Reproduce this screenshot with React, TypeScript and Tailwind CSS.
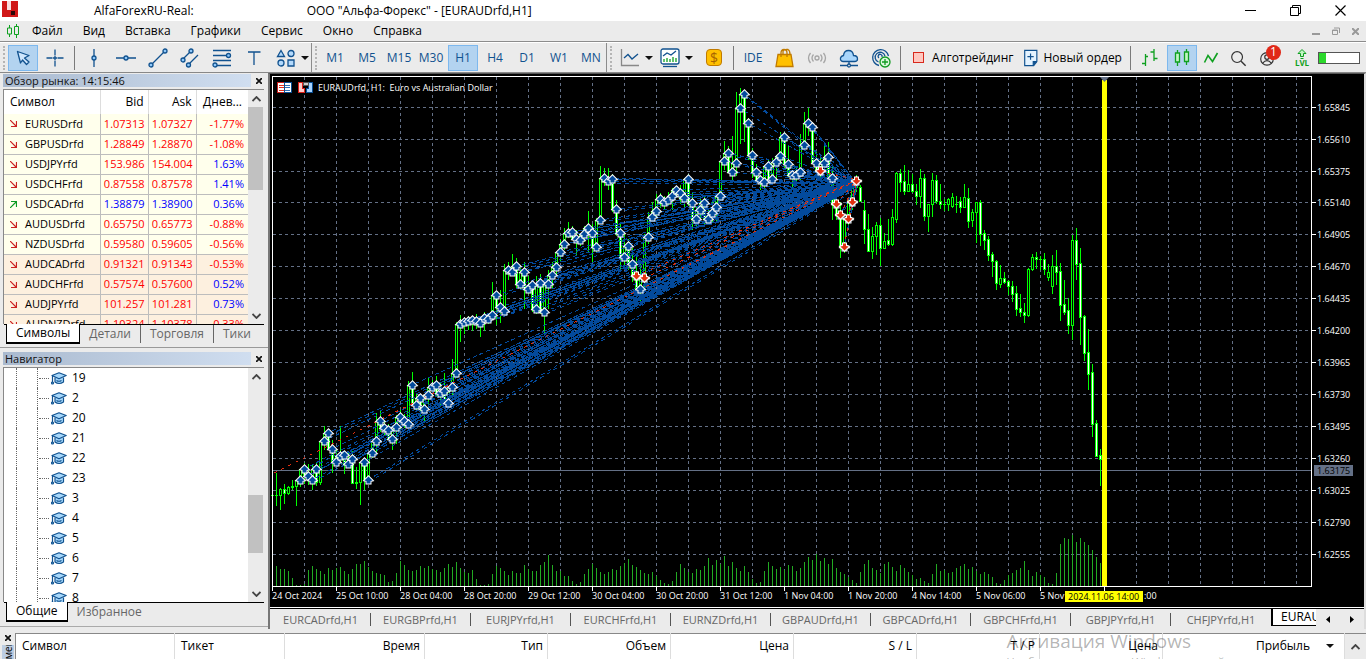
import type { ReactNode } from "react";
import clsx from "clsx";

interface Quote {
  symbol: string;
  bid: string;
  ask: string;
  daily: string;
  up?: boolean;
}

const quotes: Quote[] = [
  { symbol: "EURUSDrfd", bid: "1.07313", ask: "1.07327", daily: "-1.77%" },
  { symbol: "GBPUSDrfd", bid: "1.28849", ask: "1.28870", daily: "-1.08%" },
  { symbol: "USDJPYrfd", bid: "153.986", ask: "154.004", daily: "1.63%" },
  { symbol: "USDCHFrfd", bid: "0.87558", ask: "0.87578", daily: "1.41%" },
  { symbol: "USDCADrfd", bid: "1.38879", ask: "1.38900", daily: "0.36%", up: true },
  { symbol: "AUDUSDrfd", bid: "0.65750", ask: "0.65773", daily: "-0.88%" },
  { symbol: "NZDUSDrfd", bid: "0.59580", ask: "0.59605", daily: "-0.56%" },
  { symbol: "AUDCADrfd", bid: "0.91321", ask: "0.91343", daily: "-0.53%" },
  { symbol: "AUDCHFrfd", bid: "0.57574", ask: "0.57600", daily: "0.52%" },
  { symbol: "AUDJPYrfd", bid: "101.257", ask: "101.281", daily: "0.73%" },
  { symbol: "AUDNZDrfd", bid: "1.10324", ask: "1.10378", daily: "0.33%" },
];

const menuItems = ["Файл", "Вид", "Вставка", "Графики", "Сервис", "Окно", "Справка"];
const timeframes = ["M1", "M5", "M15", "M30", "H1", "H4", "D1", "W1", "MN"];
const treeItems = ["19", "2", "20", "21", "22", "23", "3", "4", "5", "6", "7", "8"];
const chartTabs = [
  "EURCADrfd,H1",
  "EURGBPrfd,H1",
  "EURJPYrfd,H1",
  "EURCHFrfd,H1",
  "EURNZDrfd,H1",
  "GBPAUDrfd,H1",
  "GBPCADrfd,H1",
  "GBPCHFrfd,H1",
  "GBPJPYrfd,H1",
  "CHFJPYrfd,H1",
];

// Bars with entries: [open, high, low] in chart units, close is the next open
const entryBars: number[][] = [
  [495, 495, 526], [495, 473, 506], [495, 488, 510], [489, 484, 504], [493, 486, 495],
  [487, 480, 490], [486, 484, 506], [480, 470, 487], [469, 463, 484], [476, 464, 485],
  [480, 465, 490], [469, 463, 486], [482, 440, 485], [441, 426, 450], [433, 430, 450],
  [449, 440, 473], [462, 450, 465], [456, 426, 463], [455, 453, 474], [464, 452, 466],
  [459, 451, 483], [483, 467, 489], [482, 462, 505], [462, 458, 490], [480, 464, 484],
  [453, 446, 458], [441, 413, 452], [421, 411, 432], [428, 420, 436], [430, 424, 436],
  [439, 426, 450], [427, 415, 444], [417, 410, 430], [421, 414, 428], [424, 381, 430],
  [385, 372, 403], [405, 394, 412], [398, 394, 416], [409, 396, 423], [395, 378, 404],
  [387, 380, 396], [385, 376, 396], [393, 382, 406], [391, 373, 404], [403, 386, 408],
  [387, 359, 395], [373, 322, 376], [324, 315, 342], [322, 318, 334], [321, 316, 330],
  [320, 316, 331], [321, 314, 329], [323, 318, 337], [318, 312, 331], [319, 313, 324],
  [315, 282, 320], [295, 292, 325], [307, 290, 323], [311, 264, 314], [270, 262, 280],
  [272, 254, 276], [266, 258, 288], [284, 268, 290], [272, 262, 309], [289, 276, 294],
  [285, 280, 312], [309, 276, 314], [283, 274, 314], [312, 280, 335], [284, 270, 309],
  [275, 262, 289], [267, 258, 276], [252, 240, 262], [244, 228, 250], [233, 222, 238],
  [232, 226, 240], [239, 230, 256], [240, 233, 246], [234, 226, 242], [228, 211, 253],
  [233, 224, 262], [247, 218, 252], [220, 166, 222], [178, 168, 186], [181, 168, 190],
  [179, 174, 212], [209, 200, 236], [233, 222, 271], [257, 233, 270], [246, 239, 270],
  [264, 248, 282], [276, 254, 284], [289, 262, 306], [278, 234, 290], [237, 212, 244],
  [217, 202, 222], [211, 194, 218], [199, 193, 208], [202, 196, 210], [200, 192, 206],
  [196, 188, 210], [190, 186, 198], [193, 185, 204], [198, 178, 207], [179, 174, 206],
  [203, 193, 230], [219, 206, 226], [210, 196, 218], [203, 196, 224], [219, 208, 225],
  [213, 200, 222], [207, 194, 222], [196, 165, 199], [161, 141, 170], [153, 146, 170],
  [172, 136, 182], [163, 92, 176], [108, 88, 144], [94, 90, 142], [123, 118, 160],
  [155, 148, 178], [172, 164, 184], [180, 172, 190], [182, 174, 188], [166, 160, 178],
  [179, 158, 183], [162, 155, 180], [156, 132, 164], [137, 132, 168], [164, 145, 178],
  [175, 170, 190], [175, 168, 181], [172, 134, 184], [145, 112, 148], [123, 108, 136],
  [127, 122, 164], [163, 152, 174], [171, 156, 180], [163, 144, 172], [157, 142, 182],
  [178, 166, 220], [204, 192, 220], [215, 202, 258], [247, 218, 253], [219, 200, 228],
  [202, 188, 210], [181, 175, 192],
];

// Later bars: [open, high, low, close]
const laterBars: number[][] = [
  [187, 185, 201, 201], [210, 200, 244, 229], [229, 214, 251, 251], [251, 227, 259, 236],
  [236, 222, 255, 225], [225, 218, 266, 248], [248, 233, 249, 241], [240, 219, 246, 244],
  [244, 209, 246, 217], [219, 172, 223, 173], [173, 169, 192, 182], [181, 165, 195, 191],
  [191, 170, 192, 184], [184, 174, 193, 191], [191, 184, 205, 196], [196, 169, 208, 178],
  [178, 174, 221, 216], [216, 204, 232, 204], [204, 173, 217, 180], [180, 175, 204, 201],
  [201, 184, 209, 204], [204, 199, 211, 204], [204, 198, 211, 199], [206, 193, 208, 197],
  [204, 196, 213, 204], [201, 197, 213, 207], [207, 184, 207, 197], [198, 188, 228, 221],
  [220, 209, 227, 212], [212, 202, 243, 202], [202, 200, 246, 234], [233, 230, 250, 240],
  [239, 236, 261, 255], [254, 252, 277, 261], [261, 260, 290, 283], [284, 265, 288, 278],
  [278, 272, 284, 282], [281, 280, 295, 286], [286, 281, 302, 294], [293, 286, 316, 309],
  [308, 294, 317, 312], [312, 303, 323, 315], [315, 268, 317, 269], [269, 254, 271, 257],
  [257, 252, 269, 259], [259, 256, 270, 259], [259, 253, 275, 269], [277, 264, 281, 272],
  [286, 255, 294, 266], [266, 250, 285, 272], [271, 263, 321, 305], [304, 280, 315, 312],
  [310, 298, 334, 325], [325, 235, 340, 240], [240, 228, 280, 264], [263, 248, 345, 317],
  [316, 315, 361, 353], [352, 329, 390, 374], [372, 364, 437, 424], [423, 420, 456, 456],
  [455, 449, 486, 459],
];

const volumes: number[] = [
  30, 20, 17, 17, 15, 8, 1, 1, 2, 16, 20, 17, 15, 12, 18, 16, 18, 19, 15, 12, 17, 22, 22, 25, 19,
  15, 13, 12, 11, 4, 5, 13, 25, 21, 16, 15, 16, 20, 18, 20, 17, 16, 14, 18, 22, 19, 24, 18, 14, 13,
  16, 7, 1, 1, 2, 12, 20, 18, 15, 11, 15, 13, 13, 21, 17, 15, 15, 21, 24, 31, 21, 15, 15, 10, 10,
  5, 2, 4, 12, 17, 22, 18, 14, 12, 14, 17, 16, 20, 23, 27, 21, 19, 16, 13, 12, 14, 10, 6, 3, 2,
  5, 14, 22, 18, 14, 13, 17, 16, 20, 28, 21, 26, 22, 30, 20, 24, 18, 15, 20, 14, 7, 3, 4, 15, 24,
  20, 17, 19, 16, 21, 20, 15, 18, 24, 29, 26, 32, 25, 28, 22, 27, 18, 14, 12, 9, 6, 3, 14, 22, 26,
  18, 16, 13, 22, 24, 19, 15, 21, 18, 14, 11, 7, 8, 5, 3, 12, 22, 15, 16, 13, 14, 18, 20, 22, 17,
  19, 15, 12, 14, 12, 9, 3, 2, 6, 11, 13, 16, 18, 25, 16, 10, 14, 11, 9, 3, 2, 13, 42, 48, 47, 51,
  44, 48, 44, 41, 36, 29, 23,
];

const priceLabels = [
  { y: 107, text: "1.65845" }, { y: 139, text: "1.65610" }, { y: 171, text: "1.65375" },
  { y: 202, text: "1.65140" }, { y: 234, text: "1.64905" }, { y: 266, text: "1.64670" },
  { y: 298, text: "1.64435" }, { y: 330, text: "1.64200" }, { y: 362, text: "1.63965" },
  { y: 394, text: "1.63730" }, { y: 426, text: "1.63495" }, { y: 458, text: "1.63260" },
  { y: 490, text: "1.63025" }, { y: 522, text: "1.62790" }, { y: 554, text: "1.62555" },
];

const timeLabels = [
  "24 Oct 2024", "25 Oct 10:00", "28 Oct 04:00", "28 Oct 20:00", "29 Oct 12:00", "30 Oct 04:00",
  "30 Oct 20:00", "31 Oct 12:00", "1 Nov 04:00", "1 Nov 20:00", "4 Nov 14:00", "5 Nov 06:00",
  "5 Nov",
];

const CHART_LEFT = 272;
const STEP = 4;
const noEntry = [12, 21, 22];
const sellEntries = [91, 93, 137, 141, 142, 143, 144, 145, 146];

const bars = [
  ...entryBars.map(([open, high, low], i) => ({
    open,
    high,
    low,
    close: i + 1 < entryBars.length ? entryBars[i + 1][0] : 187,
  })),
  ...laterBars.map(([open, high, low, close]) => ({ open, high, low, close })),
];

const entries = entryBars
  .map(([y], i) => ({ x: CHART_LEFT + i * STEP, y, i, sell: sellEntries.includes(i) }))
  .filter(({ i }) => i >= 7 && !noEntry.includes(i));

const gridColumns = Array.from({ length: 32 }, (_, i) => 304 + i * 32);

function Candles() {
  return (
    <g shapeRendering="crispEdges">
      {bars.map((bar, i) => {
        const x = CHART_LEFT + i * STEP;
        const top = Math.min(bar.open, bar.close);
        const height = Math.abs(bar.open - bar.close);
        const high = Math.min(bar.high, top);
        const low = Math.max(bar.low, top + height);
        return (
          <g key={i}>
            <rect x={x} y={high} width={1} height={low - high} fill="#00ff00" />
            <rect x={x - 1} y={top} width={3} height={height + 1} fill="#00ff00" />
            {height > 1 && (
              <rect x={x} y={top + 1} width={1} height={height - 1} fill={bar.close > bar.open ? "#ffffff" : "#000000"} />
            )}
          </g>
        );
      })}
    </g>
  );
}

function Chart() {
  return (
    <svg
      viewBox="270 74 1094 533"
      preserveAspectRatio="xMinYMin slice"
      className="block h-full w-full font-['Open_Sans',sans-serif] text-[9px]"
      role="img"
      aria-label="EURAUDrfd, H1"
    >
      <rect x={270} y={74} width={1094} height={533} fill="#000" />
      <g stroke="#647086" strokeDasharray="3 3" shapeRendering="crispEdges">
        {gridColumns.map((x) => (
          <line key={x} x1={x + 0.5} x2={x + 0.5} y1={77} y2={586} />
        ))}
        {priceLabels.map(({ y }) => (
          <line key={y} x1={273} x2={1311} y1={y + 0.5} y2={y + 0.5} />
        ))}
      </g>
      <line x1={273} x2={1311} y1={470.5} y2={470.5} stroke="#647086" />

      <g fill="#22aa22" shapeRendering="crispEdges">
        {volumes.map((v, i) => (
          <rect key={i} x={CHART_LEFT + i * STEP} y={586 - v} width={1} height={v} />
        ))}
      </g>
      <Candles />

      {/* links from entries to the common exit */}
      <g stroke="#034a9c" shapeRendering="crispEdges">
        {entries.map(({ x, y, i }) => (
          <g key={i}>
            <line x1={x} y1={y} x2={857} y2={184} strokeDasharray="4 3" strokeDashoffset={i % 4} />
            {i % 2 === 0 && <line x1={x + 1} y1={y + 2} x2={857} y2={186} strokeDasharray="4 4" />}
          </g>
        ))}
      </g>
      <g stroke="#e03010" strokeDasharray="3 5" shapeRendering="crispEdges">
        <line x1={274} y1={473} x2={856} y2={181} />
        {entries
          .filter(({ sell }) => sell)
          .map(({ x, y }) => (
            <line key={x} x1={x} y1={y} x2={857} y2={180} />
          ))}
      </g>
      <g fill="#034a9c" stroke="#fff" strokeWidth={2} paintOrder="stroke">
        {entries.map(({ x, y, i }) => (
          <path key={i} transform={`translate(${x + 0.5} ${y + 0.5})`} d="M0 -4 4 0 2 .5V3H-2V.5L-4 0Z" />
        ))}
      </g>
      <g fill="#e03010" stroke="#fff" strokeWidth={2} paintOrder="stroke">
        {entries
          .filter(({ sell }) => sell)
          .map(({ x, y, i }) => (
            <path key={i} transform={`translate(${x + 0.5} ${y - 0.5})`} d="M0 4 4 0 1.500 -.5V-3H-1.500V-.5L-4 0Z" />
          ))}
      </g>

      <rect x={1102} y={80} width={5} height={506} fill="#ff0" />
      <path d="M1100 77h9l-4.500 5z" fill="#647086" />

      <g stroke="#fff" shapeRendering="crispEdges">
        <path d="M272.500 586V76.500H1311.500V586.500H272" fill="none" />
        {priceLabels.map(({ y }) => (
          <line key={y} x1={1312} x2={1316} y1={y + 0.5} y2={y + 0.5} />
        ))}
        {timeLabels.map((label, i) => (
          <line key={label} x1={272.5 + i * 64} x2={272.5 + i * 64} y1={587} y2={591} />
        ))}
        <line x1={1104.5} x2={1104.5} y1={587} y2={591} />
      </g>
      <g fill="#fff">
        {priceLabels.map(({ y, text }) => (
          <text key={text} x={1317} y={y + 4}>{text}</text>
        ))}
        {timeLabels.map((label, i) => (
          <text key={label} x={272 + i * 64} y={599}>{label}</text>
        ))}
        <text x={1144} y={599}>:00</text>
        <text x={318} y={91}>EURAUDrfd, H1:&nbsp; Euro vs Australian Dollar</text>
      </g>
      <rect x={1314} y={465} width={39} height={11} fill="#647086" />
      <text x={1317} y={474} fill="#000">1.63175</text>
      <rect x={1065} y={591} width={78} height={11} fill="#ff0" />
      <text x={1068} y={600} fill="#000">2024.11.06 14:00</text>

      <g shapeRendering="crispEdges">
        <rect x={277.5} y={82.5} width={7} height={10} fill="#fff" stroke="#c8201c" />
        <rect x={284.5} y={82.5} width={7} height={10} fill="#fff" stroke="#0a4f94" />
        <path d="M279 85.500h5M279 87.500h5M279 90.500h5" stroke="#e0301c" />
        <path d="M285 85.500h5M285 87.500h5M285 90.500h5" stroke="#2a70b8" />
        <path d="M298.500 82.500h4v6h2v4h-6z" fill="#fcc" stroke="#d82018" />
        <path d="M312.500 82.500h-4v6h-2v4h6z" fill="#a8d4ff" stroke="#0a4f94" />
        <path d="M303 82h5v3h-5z" fill="#ccc" stroke="#555" />
      </g>
    </svg>
  );
}

function Icon({ children, size = 20 }: { children: ReactNode; size?: number }) {
  return (
    <svg width={size} height={size} viewBox="0 0 20 20" fill="none" stroke="#11528f" strokeWidth={1.3} className="shrink-0" aria-hidden="true">
      {children}
    </svg>
  );
}

interface ToolButtonProps {
  label: string;
  active?: boolean;
  narrow?: boolean;
  children: ReactNode;
}

function ToolButton({ label, active, narrow, children }: ToolButtonProps) {
  return (
    <button
      type="button"
      aria-label={label}
      aria-pressed={active}
      className={clsx(
        "relative flex h-[26px] shrink-0 items-center justify-center border text-[#11528f]",
        narrow ? "w-6" : "w-[30px]",
        active ? "border-[#7db8ee] bg-[#b3d3f0]" : "border-transparent",
      )}
    >
      {children}
    </button>
  );
}

function Grip() {
  return <span className="mx-[3px] h-6 w-0 shrink-0 border-l-2 border-dotted border-[#b5b5b5]" />;
}

function Separator() {
  return <span className="mx-1 h-6 w-px shrink-0 bg-[#7a7a7a]" />;
}

function GroupEnd() {
  return <span className="h-full w-px shrink-0 bg-[#8c8c8c]" />;
}

function Caret({ label }: { label: string }) {
  return (
    <button type="button" aria-label={label} className="flex h-6 w-2 shrink-0 items-center justify-center">
      <svg width="8" height="4" viewBox="0 0 8 4" aria-hidden="true">
        <path d="M0 0h8L4 4z" fill="#111" />
      </svg>
    </button>
  );
}

function Toolbar() {
  return (
    <div role="toolbar" aria-label="Панель инструментов" className="flex h-[30px] shrink-0 items-center border-t border-white bg-[#ebebeb]">
      <Grip />
      <div className="flex items-center gap-0.5">
        <ToolButton label="Курсор" active>
          <Icon><path d="M4.500 3.500 16 7.500 11.500 10l4.500 4-2.500 2.500-4-4.500L7.500 15z" fill="#cfe6fc" strokeLinejoin="round" /></Icon>
        </ToolButton>
        <ToolButton label="Перекрестие">
          <Icon><path d="M10 1.500v6M10 12.500v6M1.500 10h6M12.500 10h6" /><path d="M8 10h4M10 8v4" /></Icon>
        </ToolButton>
      </div>
      <Separator />
      <div className="flex items-center gap-0.5">
        <ToolButton label="Вертикальная линия">
          <Icon><path d="M10 1v7M10 12v7" /><circle cx="10" cy="10" r="2" fill="#8fc8fa" /></Icon>
        </ToolButton>
        <ToolButton label="Горизонтальная линия">
          <Icon><path d="M0 10h8M12 10h8" /><circle cx="10" cy="10" r="2" fill="#8fc8fa" /></Icon>
        </ToolButton>
        <ToolButton label="Трендовая линия">
          <Icon><path d="M4 16 16 4" /><circle cx="3" cy="17" r="2" fill="#8fc8fa" /><circle cx="17" cy="3" r="2" fill="#8fc8fa" /></Icon>
        </ToolButton>
        <ToolButton label="Канал">
          <Icon><path d="m3 11 8-8M9 16l9-9" /><circle cx="3" cy="12" r="2" fill="#8fc8fa" /><circle cx="11" cy="3" r="2" fill="#8fc8fa" /><circle cx="8.500" cy="17" r="2" fill="#8fc8fa" /></Icon>
        </ToolButton>
        <ToolButton label="Фибоначчи">
          <Icon><path d="M1 2.500h18M1 7.500h14M1 12.500h18M5 17.500h14" /><circle cx="16.500" cy="7.500" r="2" fill="#8fc8fa" /><circle cx="3" cy="17" r="2" fill="#8fc8fa" /></Icon>
        </ToolButton>
        <ToolButton label="Текст">
          <Icon><path d="M4 4h12.500M10 4v13" /></Icon>
        </ToolButton>
        <ToolButton label="Объекты">
          <Icon>
            <g fill="#b4dafc">
              <path d="m5 2.500 3.500 6h-7z" />
              <circle cx="15" cy="5.500" r="3" />
              <circle cx="5" cy="15" r="3" />
              <path d="M12 12h6v6h-6z" />
            </g>
          </Icon>
        </ToolButton>
      </div>
      <Caret label="Список объектов" />
      <span className="w-0.5 shrink-0" />
      <GroupEnd />
      <Grip />
      <div className="flex items-center gap-0.5">
        {timeframes.map((tf) => (
          <ToolButton key={tf} label={tf} active={tf === "H1"}>{tf}</ToolButton>
        ))}
      </div>
      <GroupEnd />
      <Grip />
      <ToolButton label="Тип графика">
        <Icon><path d="M1.500 1v16.500H19" stroke="#888" /><path d="m4 10 4-3.500 4 4.500 6-5" /></Icon>
      </ToolButton>
      <Caret label="Типы графика" />
      <span className="w-0.5 shrink-0" />
      <ToolButton label="Индикаторы">
        <Icon>
          <rect x="1" y="1" width="18" height="15" rx="2" fill="#fff" />
          <path d="m3 8 4-3 4 2 5-4" /><path d="M4 14v-3M7 14v-4M10 14v-3M13 14v-5M16 14v-4" stroke="#0fa020" />
          <path d="M3 18.500h14" />
        </Icon>
      </ToolButton>
      <Caret label="Список индикаторов" />
      <span className="w-1.5 shrink-0" />
      <ToolButton label="Стратегии">
        <span className="flex h-[17px] w-4 items-center justify-center rounded-sm border border-[#c07a00] bg-[#ffc000] text-sm text-[#a86400]">$</span>
      </ToolButton>
      <Separator />
      <ToolButton label="MetaEditor">IDE</ToolButton>
      <span className="w-0.5 shrink-0" />
      <ToolButton label="Маркет">
        <Icon><path d="M3 6.500h13l2 12H1z" fill="#ffc000" stroke="#c07a00" /><path d="M6 9V5q0-3.500 3-3.500T12 5v4M8 6V3q1.500-2 5-1.500 2 1 2 5" stroke="#c07a00" /></Icon>
      </ToolButton>
      <span className="w-0.5 shrink-0" />
      <ToolButton label="Сигналы">
        <Icon><g stroke="#a5a5a5"><circle cx="10" cy="10" r="2" /><path d="M6.500 6.500q-3 3.500 0 7M13.500 6.500q3 3.500 0 7M3.500 5q-4 5 0 10M16.500 5q4 5 0 10" /></g></Icon>
      </ToolButton>
      <span className="w-0.5 shrink-0" />
      <ToolButton label="VPS">
        <Icon><path d="M4 13.500Q1 13 1.500 10q.5-2 3-2.500Q5 2.500 9.500 2.500q4.500 0 5 5 4 0 4 3.500 0 2.500-3 2.500z" fill="#a8d6fc" /><path d="M10 14v2M1 17.500h7M12 17.500h7" /><circle cx="10" cy="17.500" r="1.500" /></Icon>
      </ToolButton>
      <span className="w-0.5 shrink-0" />
      <ToolButton label="Копирование">
        <Icon>
          <path d="M8 17.500A8 8 0 1 1 17.500 8M7.500 14A5 5 0 1 1 14 8M8 10a2 2 0 1 1 3-1" />
          <circle cx="14" cy="14" r="5" fill="#d9f7dc" stroke="#109a20" />
          <path d="M11 14h6M14 11v6" stroke="#109a20" />
        </Icon>
      </ToolButton>
      <Separator />
      <button type="button" className="flex shrink-0 items-center gap-2 pr-1 pl-2 whitespace-nowrap text-black">
        <span className="h-[11px] w-[11px] border border-[#d8281c] bg-[#ffc8c0]" />
        Алготрейдинг
      </button>
      <button type="button" className="flex shrink-0 items-center gap-1 px-1 whitespace-nowrap text-black">
        <Icon size={18}><path d="M3 1.500h13.500V14L13 18.500H3z" fill="#e4f3ff" /><path d="M12.500 18.500V14h4" fill="#11528f" /><path d="M6 8.500h7M9.500 5v7" /></Icon>
        Новый ордер
      </button>
      <Separator />
      <div className="flex items-center gap-0.5">
        <ToolButton label="Бары">
          <Icon><path d="M5.500 6v12M2 15.500h3.500M5.500 8.500H8M14 1v12M10.500 4H14M14 10.500h3.500" stroke="#0fa020" /></Icon>
        </ToolButton>
        <ToolButton label="Свечи" active>
          <Icon><path d="M5.500 2v16M14.500 1v16" stroke="#0fa020" /><path d="M3.500 5h4v9h-4zM12.500 4h4v9.500h-4z" fill="#c2f5c4" stroke="#0fa020" /></Icon>
        </ToolButton>
        <ToolButton label="Линия" narrow>
          <Icon><path d="m3.500 14.500 3.500-7 4.500 6L16.500 5" stroke="#0fa020" strokeWidth={1.6} /></Icon>
        </ToolButton>
      </div>
      <span className="grow" />
      <ToolButton label="Поиск" narrow>
        <Icon size={18}><circle cx="9" cy="9" r="6" stroke="#333" /><path d="m13.500 13.500 5 5" stroke="#333" strokeWidth={1.6} /></Icon>
      </ToolButton>
      <span className="w-0.5 shrink-0" />
      <ToolButton label="Аккаунт">
        <Icon size={18}><g stroke="#333"><circle cx="10" cy="11" r="7" /><circle cx="10" cy="9" r="2.500" /><path d="M5 16q5-6 10 0" /></g></Icon>
        <span className="absolute -top-px right-0 flex h-[15px] w-[15px] items-center justify-center rounded-full bg-[#e02818] text-white">1</span>
      </ToolButton>
      <button type="button" aria-label="Уровень" className="ml-1 flex w-8 shrink-0 flex-col items-center text-[8px] leading-[7px] font-bold text-[#0fa020]">
        <svg width="10" height="10" viewBox="0 0 10 10" fill="#c2f5c4" stroke="#0fa020" aria-hidden="true">
          <path d="M5 .5 9 4.500H6.500v3h-3v-3H1zM3.500 9.500h3" />
        </svg>
        LVL
      </button>
      <div className="mr-1.5 flex h-3 w-[42px] shrink-0 border border-[#555] bg-white">
        <span className="w-[7px] bg-[#2bd82b]" />
      </div>
    </div>
  );
}

function CloseButton() {
  return (
    <button type="button" aria-label="Закрыть" className="flex h-3 w-3 items-center justify-center">
      <svg width="6" height="6" viewBox="0 0 6 6" stroke="#111" strokeWidth="1.700" aria-hidden="true">
        <path d="m0 0 6 6M6 0 0 6" />
      </svg>
    </button>
  );
}

function DockTitle({ children }: { children: ReactNode }) {
  return (
    <div className="flex h-[13px] shrink-0 items-center justify-between pr-[3px] pl-[3px]">
      <h2 className="w-[248px] bg-linear-to-r from-[#aabacf] to-[#d0def0] pl-0.5 text-[11px] leading-[13px] text-[#111]">{children}</h2>
      <CloseButton />
    </div>
  );
}

function Chevron({ up }: { up?: boolean }) {
  return (
    <svg width="9" height="6" viewBox="0 0 9 6" fill="none" stroke="#444" strokeWidth="1.800" aria-hidden="true">
      <path d={up ? "m.500 5 4-4 4 4" : "m.500 1 4 4 4-4"} />
    </svg>
  );
}

function ScrollBar({ before, thumb }: { before: number; thumb: number }) {
  return (
    <div className="flex w-4 shrink-0 flex-col bg-[#ebebeb]">
      <button type="button" aria-label="Вверх" className="flex h-[17px] items-center justify-center"><Chevron up /></button>
      <div className="w-[15px] grow">
        <div className="bg-[#c1c1c1]" style={{ height: thumb, marginTop: before }} />
      </div>
      <button type="button" aria-label="Вниз" className="flex h-[17px] items-center justify-center"><Chevron /></button>
    </div>
  );
}

function DockTabs({ tabs }: { tabs: string[] }) {
  return (
    <div className="mx-1 flex h-5 shrink-0 items-start border-t border-black text-[#666]">
      {tabs.map((tab, i) => (
        <button
          key={tab}
          type="button"
          className={clsx(
            "px-[9px] leading-[18px]",
            i === 0 ? "-mt-px ml-0.5 h-5 border-x border-b-2 border-black bg-white text-black" : "",
            i > 1 && "border-l border-[#666]",
          )}
        >
          {tab}
        </button>
      ))}
    </div>
  );
}

function MarketWatch() {
  return (
    <section className="flex h-[275px] shrink-0 flex-col pt-px">
      <DockTitle>Обзор рынка: 14:15:46</DockTitle>
      <div className="mt-0.5 mr-1 ml-[3px] flex min-h-0 flex-1 overflow-hidden border-t border-l border-[#888] bg-white">
        <div className="min-w-0 flex-1 overflow-hidden">
          <table className="w-full table-fixed border-collapse">
            <thead>
              <tr className="h-6 text-right">
                <th className="w-[96px] border-r border-[#ddd] pl-1.5 text-left font-normal">Символ</th>
                <th className="w-12 border-r border-[#ddd] pr-1 font-normal">Bid</th>
                <th className="w-12 border-r border-[#ddd] pr-1 font-normal">Ask</th>
                <th className="pr-1.5 font-normal">Днев...</th>
              </tr>
            </thead>
            <tbody>
              {quotes.map((q, i) => (
                <tr
                  key={q.symbol}
                  className={clsx(
                    "h-5 border-b border-[#bdbdbd] text-right text-[11px]",
                    i < 7 ? "bg-[#ffffec]" : "bg-[#fdf0df]",
                    q.up ? "text-[#0000ff]" : "text-[#ff0000]",
                  )}
                >
                  <td className="border-r border-[#bdbdbd] p-0 text-black">
                    <div className="flex items-center gap-2 pl-1.5 leading-[18px]">
                      <svg width="7" height="7" viewBox="0 0 7 7" fill="none" stroke={q.up ? "#0a9a20" : "#cc2222"} strokeWidth="1.200" aria-hidden="true">
                        {q.up ? <path d="M0 7 6.500.5M1 .5h5.500V6" /> : <path d="m0 0 6.500 6.500M6.500 1v5.500H1" />}
                      </svg>
                      {q.symbol}
                    </div>
                  </td>
                  <td className="border-r border-[#bdbdbd] p-0 pr-[3px] leading-[18px]">{q.bid}</td>
                  <td className="border-r border-[#bdbdbd] p-0 pr-[3px] leading-[18px]">{q.ask}</td>
                  <td className={clsx("p-0 pr-1 leading-[18px]", q.daily.startsWith("-") || i === 10 ? "text-[#ff0000]" : "text-[#0000ff]")}>
                    {q.daily}
                  </td>
                </tr>
              ))}
            </tbody>
          </table>
        </div>
        <ScrollBar before={0} thumb={83} />
      </div>
      <DockTabs tabs={["Символы", "Детали", "Торговля", "Тики"]} />
      <div className="mt-[3px] h-px bg-[#999]" />
    </section>
  );
}

function CapIcon() {
  return (
    <svg width="16" height="13" viewBox="0 0 16 13" fill="#a6d8fc" stroke="#11528f" strokeWidth="1.200" strokeLinejoin="round" aria-hidden="true">
      <path d="M4 5.500V10q4 3 8.500 0V5.500" />
      <path d="M1 3.500 8 .8l7.200 2.700L8 6.800z" />
      <path d="M5.500 8.500q2.500 1.500 5 0M1.500 3.800V10" fill="none" />
      <circle cx="1.500" cy="11" r="1" />
    </svg>
  );
}

function Navigator() {
  return (
    <section className="flex min-h-0 flex-1 flex-col pt-1">
      <DockTitle>Навигатор</DockTitle>
      <div className="mt-0.5 mr-1 ml-[3px] flex min-h-0 flex-1 overflow-hidden border-t border-l border-[#888] bg-white">
        <ul className="min-w-0 flex-1 overflow-hidden">
          {treeItems.map((item) => (
            <li key={item} className="flex h-5 items-center pl-3">
              <span className="h-5 w-[21px] border-l border-dotted border-[#666]" />
              <span className="flex h-5 w-[14px] items-center border-l border-dotted border-[#666]">
                <span className="ml-px w-[10px] border-t border-dotted border-[#666]" />
              </span>
              <CapIcon />
              <a href={`#${item}`} className="ml-[5px]">{item}</a>
            </li>
          ))}
        </ul>
        <ScrollBar before={110} thumb={58} />
      </div>
      <DockTabs tabs={["Общие", "Избранное"]} />
      <div className="mt-1 mb-0.5 h-px bg-[#aaa]" />
    </section>
  );
}

function ChartTabs() {
  return (
    <div className="flex h-[22px] shrink-0 border-t border-white bg-[#ebebeb]">
      <div className="flex min-w-0 flex-1 overflow-hidden border-t border-black pl-px text-[11px] text-[#666]">
        {chartTabs.map((tab, i) => (
          <button
            key={tab}
            type="button"
            className="flex w-[100px] shrink-0 items-center justify-center"
          >
            <span className={clsx("w-full leading-[13px]", i < chartTabs.length - 1 && "border-r border-[#555]")}>{tab}</span>
          </button>
        ))}
        <button type="button" className="-mt-px h-[18px] w-[96px] shrink-0 border-b border-l-2 border-black bg-white pl-2 text-left text-xs leading-[17px] text-black">
          EURAUDrfd,H1
        </button>
      </div>
      <div className="flex w-12 shrink-0 items-center justify-around border-t border-black">
        <button type="button" aria-label="Назад" className="p-1"><svg width="4" height="7" viewBox="0 0 4 7" aria-hidden="true"><path d="M4 0v7L0 3.500z" /></svg></button>
        <button type="button" aria-label="Вперед" className="p-1"><svg width="4" height="7" viewBox="0 0 4 7" aria-hidden="true"><path d="M0 0v7l4-3.500z" /></svg></button>
      </div>
    </div>
  );
}

function TradePanel() {
  return (
    <section className="relative flex h-[30px] shrink-0 overflow-hidden bg-[#ebebeb] pt-1">
      <div className="flex w-[15px] shrink-0 flex-col items-center">
        <CloseButton />
        <h2 className="mt-0.5 h-4 w-3 overflow-hidden bg-[#bccde2] text-[10px] leading-3 [writing-mode:sideways-lr]">мен</h2>
      </div>
      <table className="min-w-0 flex-1 table-fixed border-collapse border-t border-l border-[#888] bg-white">
        <thead>
          <tr className="h-6 text-right">
            <th className="w-[159px] border-r border-[#ddd] pb-0.5 pl-1.5 text-left font-normal">Символ</th>
            <th className="w-[110px] border-r border-[#ddd] pb-0.5 pl-1.5 text-left font-normal">Тикет</th>
            <th className="w-[140px] border-r border-[#ddd] pr-1 pb-0.5 font-normal">Время</th>
            <th className="w-[123px] border-r border-[#ddd] pr-1 pb-0.5 font-normal">Тип</th>
            <th className="w-[123px] border-r border-[#ddd] pr-1 pb-0.5 font-normal">Объем</th>
            <th className="w-[123px] border-r border-[#ddd] pr-1 pb-0.5 font-normal">Цена</th>
            <th className="w-[123px] border-r border-[#ddd] pr-1 pb-0.5 font-normal">S / L</th>
            <th className="w-[123px] border-r border-[#ddd] pr-1 pb-0.5 font-normal">T / P</th>
            <th className="w-[123px] border-r border-[#ddd] pr-1 pb-0.5 font-normal">Цена</th>
            <th className="border-r border-[#ddd] pb-0.5 font-normal">
              <div className="flex h-4 items-center justify-end gap-4 pr-2.5">
                Прибыль
                <Caret label="Столбцы" />
              </div>
            </th>
          </tr>
        </thead>
      </table>
      <div className="flex w-[21px] shrink-0 items-center justify-center border-t border-[#888] bg-[#ebebeb]">
        <Chevron up />
      </div>
      <div className="pointer-events-none absolute top-0 right-[175px] text-[19px] leading-6 text-black/30">
        Активация Windows
        <div className="w-0 pt-1 text-xs leading-3 whitespace-nowrap">Чтобы активировать Windows, перейдите в</div>
      </div>
    </section>
  );
}

export default function App() {
  return (
    <div className="flex h-screen w-full flex-col overflow-hidden bg-[#ebebeb] font-['Open_Sans',sans-serif] text-xs text-black">
      <header className="flex h-[21px] shrink-0 items-center bg-white">
        <svg width="16" height="16" viewBox="0 0 16 16" className="mb-1 ml-0.5 self-end" aria-hidden="true">
          <path d="M0 0h16v16H0z" fill="#d01818" />
          <path d="M5 0h4v9H5z" fill="#f9dede" />
          <path d="M9 10h4v4H9z" fill="#2a0808" />
        </svg>
        <h1 className="ml-[76px] flex gap-[113px] leading-5">
          <span>AlfaForexRU-Real:</span>
          <span>ООО &quot;Альфа-Форекс&quot; - [EURAUDrfd,H1]</span>
        </h1>
        <div className="ml-auto flex items-center gap-[34px] pr-5">
          <button type="button" aria-label="Свернуть"><svg width="11" height="11" viewBox="0 0 11 11" stroke="#000" aria-hidden="true"><path d="M0 5.500h11" /></svg></button>
          <button type="button" aria-label="Развернуть"><svg width="11" height="11" viewBox="0 0 11 11" fill="none" stroke="#000" aria-hidden="true"><path d="M.5 2.500h8v8h-8zM2.500 2.500v-2h8v8h-2" /></svg></button>
          <button type="button" aria-label="Закрыть"><svg width="11" height="11" viewBox="0 0 11 11" stroke="#000" strokeWidth="1.200" aria-hidden="true"><path d="m.5.5 10 10M10.500.5l-10 10" /></svg></button>
        </div>
      </header>

      <nav className="flex h-[21px] shrink-0 items-center border-b border-[#8c8c8c]">
        <svg width="14" height="14" viewBox="0 0 14 14" fill="none" stroke="#0fa020" className="ml-1.5" aria-hidden="true">
          <path d="M3.500 1v3M3.500 10v3M1.500 4h4v6h-4zM10.500 0v2M10.500 11v3M8.500 2.500h4v8h-4z" />
        </svg>
        <div className="ml-0.5 flex">
          {menuItems.map((item) => (
            <button key={item} type="button" className="px-[10px]">{item}</button>
          ))}
        </div>
        <div className="ml-auto flex items-center gap-3 pr-[7px]">
          <svg width="8" height="8" viewBox="0 0 8 8" stroke="#999" strokeWidth="2" aria-hidden="true"><path d="M0 7h8" /></svg>
          <svg width="8" height="8" viewBox="0 0 8 8" fill="none" stroke="#999" aria-hidden="true"><path d="M.5 3h5v4.500h-5zM2 1h5.500v5M.5 3.500h5" /></svg>
          <svg width="7" height="7" viewBox="0 0 7 7" stroke="#999" strokeWidth="2" aria-hidden="true"><path d="m0 0 7 7M7 0 0 7" /></svg>
        </div>
      </nav>

      <Toolbar />

      <main className="flex min-h-0 flex-1 border-t border-[#888]">
        <aside className="flex w-[268px] shrink-0 flex-col">
          <MarketWatch />
          <Navigator />
        </aside>
        <div className="flex min-w-0 flex-1 flex-col border-t border-r-2 border-l-2 border-t-[#555] border-r-[#ddd] border-l-[#777]">
          <div className="min-h-0 flex-1 overflow-hidden bg-black">
            <Chart />
          </div>
          <ChartTabs />
        </div>
      </main>

      <TradePanel />
    </div>
  );
}
